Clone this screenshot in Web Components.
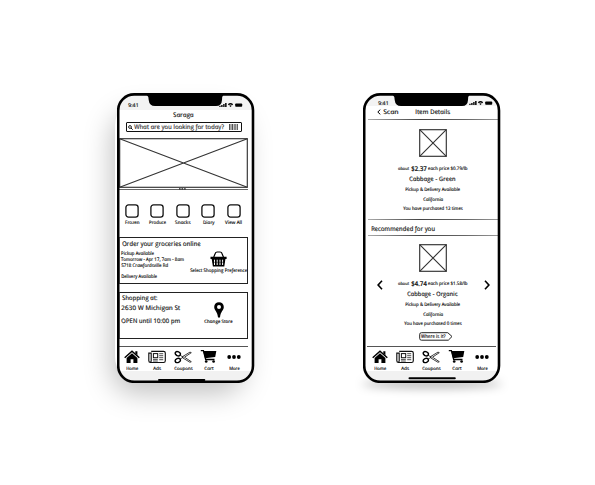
<!DOCTYPE html>
<html lang="en"><head><meta charset="utf-8"><title>Saraga wireframes</title>
<style>
html,body{margin:0;background:#fff;width:595px;height:485px;overflow:hidden}
body{font-family:"Open Sans","Noto Sans",sans-serif;font-style:italic;color:#151515}
</style></head><body>
<app-stage></app-stage>
<script>
const make=(name,html,setup)=>customElements.define(name,class extends HTMLElement{
  constructor(){super();this.attachShadow({mode:'open'})}
  connectedCallback(){
    const t=document.createElement('template');
    t.innerHTML=typeof html==='function'?html(this):html;
    this.shadowRoot.replaceChildren(t.content.cloneNode(true));
    if(setup)setup(this);
  }
});

/* Text fitted to the width w, vertically centred in a line of height h, font size s.
   The italic cut has the handwritten single-storey a; the skew sets it upright. */
make('ink-text',e=>`<style>:host{display:block;flex:none;width:${e.getAttribute('w')}px;height:${e.getAttribute('h')||8}px;line-height:${e.getAttribute('h')||8}px;font-size:${e.getAttribute('s')||5}px;white-space:nowrap}
span{display:inline-block;transform-origin:0 50%;-webkit-text-stroke:.15px currentColor}</style><span><slot></slot></span>`,
e=>{const s=e.shadowRoot.querySelector('span');const n=s.getBoundingClientRect().width;if(n)s.style.transform=`scaleX(${e.getAttribute('w')/n}) skewX(12deg)`});

const icons={
search:[5,5,'<circle cx="2" cy="2" r="1.4" fill="none" stroke="#111" stroke-width=".9"/><path d="M3 3L4.7 4.7" stroke="#111" stroke-width="1"/>'],
barcode:[9,6,'<path d="M.5 0V6M2 0V6M3.5 0V6M5.2 0V6M6.8 0V6M8.4 0V6" stroke="#333" stroke-width=".85"/>'],
status:[24,6,'<path d="M.3 5V3.8H1.6V5ZM2.2 5V3H3.6V5ZM4.2 5V2.1H5.6V5ZM6.1 5V1H7.6V5Z"/><path d="M8.8 2.2Q11.5-.2 14.2 2.2L13.2 3.2Q11.5 1.8 9.8 3.2ZM10.2 3.7Q11.5 2.7 12.8 3.7L11.5 5.1Z"/><rect x="16.2" y="1.4" width="7" height="3.3" rx=".8"/>'],
basket:[17,16,'<path d="M3.6 6.5L5.2 2.5Q5.6 1 7.2 1H10Q11.6 1 12 2.5L13.6 6.5" fill="none" stroke="#000" stroke-width="1.2"/><path d="M.5 5.8H16.6V8H15.4L14.3 15.4H2.9L1.7 8H.5Z"/><path d="M4.5 8.7V14M7.2 8.7V14M10 8.7V14M12.6 8.7V14" stroke="#fff" stroke-width="1"/><path d="M2.7 11.3H14.6" stroke="#000" stroke-width=".5"/>'],
pin:[10,16,'<path fill-rule="evenodd" d="M5 .3C2.2.3.2 2.3.2 4.9C.2 8.1 3.6 9.5 4 15.4H6C6.4 9.5 9.8 8.1 9.8 4.9C9.8 2.3 7.8.3 5 .3ZM5 3A2 2 0 1 1 5 7A2 2 0 1 1 5 3Z"/>'],
home:[16,14,'<path d="M.7 7.7L8 1.2L15.3 7.7" fill="none" stroke="#000" stroke-width="1.5"/><path d="M11.3 1.3H13.4V5.2L11.3 3.4ZM8 3.3L13.4 8.1V13.1H9.4V9.2H6.6V13.1H2.6V8.1Z"/>'],
news:[18,14,'<path d="M3.2 1.4H15.6Q17.3 1.4 17.3 3V10.7Q17.3 12.5 15.5 12.5H2.5Q.8 12.5.8 10.8V3.1H3.2V10.8Q3.2 12.2 2.2 12.4" fill="none" stroke="#111" stroke-width="1.15"/><rect x="5.4" y="3.6" width="4.3" height="4.1" fill="none" stroke="#111"/><path d="M11.2 3.7H15.2M11.2 5.7H15.2M11.2 7.7H15.2M5 9.4H9.8M11.2 9.7H15.2M5 11H9.8" stroke="#111" stroke-width=".75"/>'],
scissors:[18,14,'<g fill="none" stroke="#000"><ellipse cx="3.8" cy="3.7" rx="2.7" ry="2" transform="rotate(24 3.8 3.7)" stroke-width="1.4"/><ellipse cx="3.8" cy="10.5" rx="2.7" ry="2" transform="rotate(-24 3.8 10.5)" stroke-width="1.4"/><path d="M6 5.1L8.4 6.7L16 2.1L17.3 2.7L10.5 7.2L17.3 11.7L16 12.3L8.4 7.7L6 9.2" stroke-width=".75"/></g><circle cx="8.8" cy="7.1" r=".8"/>'],
cart:[17,15,'<path d="M.8 1.6H3.4L5.7 10.5H14.5" fill="none" stroke="#000" stroke-width="1.35"/><path d="M3.2 2H16.3L15.2 8L5 9.2Z"/><circle cx="6.2" cy="12.5" r="1.35"/><circle cx="13.6" cy="12.5" r="1.35"/>'],
more:[14,6,'<circle cx="2.2" cy="3" r="1.9"/><circle cx="7" cy="3" r="1.9"/><circle cx="11.8" cy="3" r="1.9"/>'],
left:[6,10,'<path d="M5 .7L1.1 5L5 9.3" fill="none" stroke="#000" stroke-width="1.6"/>'],
right:[6,10,'<path d="M1 .7L4.9 5L1 9.3" fill="none" stroke="#000" stroke-width="1.6"/>'],
back:[4,6,'<path d="M3.3.6L.8 3L3.3 5.4" fill="none" stroke="#000" stroke-width="1"/>'],
handle:[7,2,'<path d="M0 .9H1.6M2.5 .9H4.2M5.1 .9H6.7" stroke="#222" stroke-width="1.3"/>']
};
make('ink-icon',e=>{const[w,h,p]=icons[e.getAttribute('name')];return `<style>:host{display:block;flex:none;width:${w}px;height:${h}px}svg{display:block}</style><svg width="${w}" height="${h}" viewBox="0 0 ${w} ${h}">${p}</svg>`});

/* Crossed placeholder box */
make('image-box',e=>{const w=+e.getAttribute('w'),h=+e.getAttribute('h');return `<style>:host{display:block;flex:none;width:${w}px;height:${h}px}svg{display:block}</style><svg width="${w}" height="${h}"><g fill="none" stroke="#333" stroke-width="1.15"><rect x=".7" y=".7" width="${w-1.4}" height="${h-1.4}"/><path stroke-width="1.1" d="M.7 .7L${w-.7} ${h-.7}M.7 ${h-.7}L${w-.7} .7"/></g></svg>`});

make('tab-item',e=>`<style>:host{display:flex;flex-direction:column;align-items:center;width:25.5px;flex:none}div{height:15px;display:flex;align-items:center}</style><div><ink-icon name="${e.getAttribute('icon')}"></ink-icon></div><ink-text w="${e.getAttribute('w')}" h="8" s="4.4"><slot></slot></ink-text>`);

make('tab-bar',`<style>:host{display:block;height:25px;flex:none;width:128.5px;box-sizing:border-box;border-top:1px solid #555}nav{display:flex;padding:2px 0 0 0}</style>
<nav><tab-item icon="home" w="12">Home</tab-item><tab-item icon="news" w="8">Ads</tab-item><tab-item icon="scissors" w="18.5">Coupons</tab-item><tab-item icon="cart" w="9.5">Cart</tab-item><tab-item icon="more" w="10.5">More</tab-item></nav>`);

make('phone-frame',e=>{const L=e.getAttribute('kind')==='home';return `<style>
:host{display:block;position:relative;width:138px;height:290px;flex:none}
.shade{position:absolute;z-index:-1;${L?'inset:8px 8px 2px -2px;border-radius:24px;box-shadow:-3px 12px 28px rgba(0,0,0,.25)':'left:-1px;right:-1px;bottom:-5px;height:8px;border-radius:50%;background:rgba(0,0,0,.3);filter:blur(5px)'}}
.screen{width:138px;height:290px;border-radius:19px;overflow:hidden;background:linear-gradient(#f3f3f3 ${L?17:13}px,#fff ${L?17:13}px 278px,#f1f1f1 278px)}
.frame{position:absolute;inset:0}
</style><div class="shade"></div><div class="screen"><slot></slot></div>
<svg class="frame" width="138" height="290"><rect x="1.2" y="1.4" width="134.8" height="287.4" rx="16" fill="none" stroke="#000" stroke-width="2.6"/><path d="M29 1H107Q105 3 105 7Q104.7 13 99 13H38Q32.3 13 31.7 7Q31.5 3 29 1Z"/><rect x="${L?41:45.5}" y="${L?286:284.2}" width="47.3" height="2" rx="1"/></svg>`});

make('check-tile',e=>`<style>:host{display:flex;flex-direction:column;align-items:center;width:25.5px;flex:none}svg{display:block}</style><svg width="14" height="14"><rect x=".9" y=".9" width="12.2" height="12.2" rx="2.6" fill="#fff" stroke="#111" stroke-width="1.3"/></svg><ink-text w="${e.getAttribute('w')}" h="9" s="4.7"><slot></slot></ink-text>`);

make('info-card',`<style>:host{display:flex;box-sizing:border-box;width:129px;height:47px;flex:none;border:1px solid #222;border-left-color:#777;padding-left:1px}
.text{width:69px;display:flex;flex-direction:column;flex:none}.side{flex:1;display:flex;flex-direction:column;align-items:center}</style><div class="text"><slot></slot></div><div class="side"><slot name="side"></slot></div>`);

make('home-screen',`<style>
:host{display:flex;flex-direction:column;padding-left:2px;height:290px}
.status{height:17px;display:flex;padding:0 0 0 9px;flex:none}
.status ink-text{margin-top:8px}.status ink-icon{margin:9px 0 0 80.5px}
.title{height:12px;padding-left:53.5px;flex:none}
.search{box-sizing:border-box;width:116px;height:10px;border:1.2px solid #111;border-radius:1px;margin-left:7px;display:flex;align-items:center;flex:none;padding-left:1px}
.search ink-text{margin-left:.5px;color:#333}.search ink-icon+ink-text+ink-icon{margin-left:5px}
.hero{margin-top:6px;height:49px;flex:none}
.rule{height:2px;width:129px;box-sizing:border-box;border-bottom:1px solid #666;display:flex;justify-content:center;flex:none;padding-right:2px;margin-top:1px}
.tiles{display:flex;margin-top:14px;height:23px;flex:none}
info-card{margin-top:10px}info-card+info-card{margin-top:8px}
tab-bar{margin-top:7px}
ink-icon[slot]{margin-top:13px}
</style>
<div class="status"><ink-text w="10.5" h="8" s="5.2">9:41</ink-text><ink-icon name="status"></ink-icon></div>
<div class="title"><ink-text w="20.5" h="9" s="6.2">Saraga</ink-text></div>
<div class="search"><ink-icon name="search"></ink-icon><ink-text w="90" h="8" s="6.2">What are you looking for today?</ink-text><ink-icon name="barcode"></ink-icon></div>
<div class="hero"><image-box w="129" h="50"></image-box></div>
<div class="rule"><ink-icon name="handle"></ink-icon></div>
<div class="tiles"><check-tile w="14.5">Frozen</check-tile><check-tile w="17">Produce</check-tile><check-tile w="15.5">Snacks</check-tile><check-tile w="11.5">Diary</check-tile><check-tile w="17">View All</check-tile></div>
<info-card>
<ink-text w="78.5" h="12" s="6.4" style="margin-left:1px">Order your groceries online</ink-text>
<ink-text w="33" h="7" s="4.8">Pickup Available</ink-text><ink-text w="63" h="5" s="4.8">Tomorrow - Apr 17, 7am - 8am</ink-text><ink-text w="47" h="6" s="4.8">5718 Crawfordsville Rd</ink-text><ink-text w="36" h="8" s="4.8" style="margin-top:4px">Delivery Available</ink-text>
<ink-icon slot="side" name="basket"></ink-icon><ink-text slot="side" w="57" h="6" s="4.8">Select Shopping Preference</ink-text>
</info-card>
<info-card>
<ink-text w="35.5" h="10" s="6.2" style="margin-left:1px">Shopping at:</ink-text><ink-text w="59" h="9" s="6.2">2630 W Michigan St</ink-text><ink-text w="59" h="9" s="6.2" style="margin-top:4px">OPEN until 10:00 pm</ink-text>
<ink-icon slot="side" name="pin" style="margin-top:9px"></ink-icon><ink-text slot="side" w="28.5" h="6" s="4.6">Change Store</ink-text>
</info-card>
<tab-bar></tab-bar>`);

make('product-info',e=>{const o=e.getAttribute('kind')==='organic';return `<style>:host{display:flex;flex-direction:column;align-items:center;width:133px;flex:none}
.price{display:flex;height:11px;margin-top:6px;width:70px;align-items:center}.price .big{margin:0 1px 0 2px;font-weight:600}
</style><image-box w="28" h="28"></image-box>
<div class="price"><ink-text w="11" h="11" s="4.3">about</ink-text><ink-text class="big" w="16" h="10" s="6.6">${o?'$4.74':'$2.37'}</ink-text><ink-text w="39.5" h="11" s="4.7">${o?'each price $1.58/lb':'each price $0.79/lb'}</ink-text></div>
<ink-text w="${o?50.5:46.5}" h="10" s="6">${o?'Cabbage - Organic':'Cabbage - Green'}</ink-text>
<ink-text w="55" h="10" s="4.7">Pickup &amp; Delivery Available</ink-text>
<ink-text w="20" h="10" s="4.7">California</ink-text>
<ink-text w="${o?57.5:59.5}" h="8" s="4.7">${o?'You have purchased 0 times':'You have purchased 12 times'}</ink-text>`});

make('tag-button',`<style>:host{display:grid;width:34px;height:9px;flex:none}svg,ink-text{grid-area:1/1}ink-text{margin-left:2.5px}</style><svg width="34" height="9"><path d="M2.5.7H28.8L33 4.5L29.3 8.2H2.5Q.7 8.2.7 6.5V2.3Q.7.7 2.5.7Z" fill="#fff" stroke="#222" stroke-width="1"/></svg><ink-text w="24.5" h="8.5" s="5"><slot></slot></ink-text>`);

make('item-screen',`<style>
:host{display:flex;flex-direction:column;padding-left:3px;height:290px}
.status{height:14px;display:flex;padding-left:12px;flex:none}.status ink-text{margin-top:6px}.status ink-icon{margin:7px 0 0 80.5px}
.bar{height:12px;display:flex;padding-left:11px;align-items:flex-start;flex:none}.bar ink-icon{margin-top:2px}.bar ink-text{margin-left:1.5px}.bar ink-text+ink-text{margin-left:17px}
.line{height:1px;width:130px;margin-left:2px;background:linear-gradient(90deg,#aaa,#444 40%,#666 75%,#999);flex:none}
.rec{height:15px;padding-left:5px;flex:none}
.wrap{height:79px;margin-top:8px;flex:none;display:grid}
.wrap>*{grid-area:1/1}.arrows{display:flex;justify-content:space-between;padding:36px 11px 0 10.5px}
tag-button{margin:9px 0 0 52.5px}tab-bar{margin:5px 0 0 1px}
</style>
<div class="status"><ink-text w="10.5" h="8" s="5.2">9:41</ink-text><ink-icon name="status"></ink-icon></div>
<div class="bar"><ink-icon name="back"></ink-icon><ink-text w="15.5" h="9" s="6.2">Scan</ink-text><ink-text w="35" h="9" s="6.2">Item Details</ink-text></div>
<div class="line"></div>
<product-info kind="green" style="margin-top:9px;height:90px"></product-info>
<div class="line"></div>
<div class="rec"><ink-text w="64" h="18" s="6.4">Recommended for you</ink-text></div>
<div class="line"></div>
<div class="wrap"><product-info kind="organic"></product-info><div class="arrows"><ink-icon name="left"></ink-icon><ink-icon name="right"></ink-icon></div></div>
<tag-button>Where is it?</tag-button>
<tab-bar></tab-bar>`);

make('app-stage',`<style>:host{display:flex;box-sizing:border-box;width:595px;height:485px;padding:93px 0 0 117px;gap:108px;align-items:flex-start;position:relative;z-index:0;overflow:hidden}</style>
<phone-frame kind="home"><home-screen></home-screen></phone-frame><phone-frame kind="item"><item-screen></item-screen></phone-frame>`);
</script></body></html>
